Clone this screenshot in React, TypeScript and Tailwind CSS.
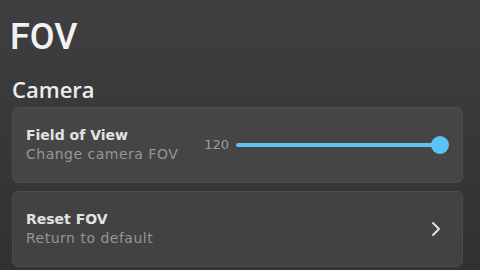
import { ChevronRight } from "lucide-react";

export default function App() {
  const value = 120;
  const pct = 100;

  return (
    <div className="w-[480px] h-[270px] overflow-hidden bg-gradient-to-b from-[#3f3f41] to-[#313131]">
      <div className="px-3">
        <h1 className="pt-[15px] text-[36px] leading-[44px] font-medium text-[#f2f2f2] -ml-[2px] font-['Roboto',sans-serif]">FOV</h1>
        <h2 className="mt-[17px] text-[22px] leading-[26px] font-semibold text-[#ececec] font-['Open_Sans',sans-serif]">Camera</h2>

        <div className="mt-[5px] flex flex-col gap-[8px] w-[451px] font-['DejaVu_Sans',sans-serif]">
          {/* Field of view */}
          <div className="h-[76px] rounded-md bg-[#454545] border border-[#4d4d4d] px-[13px] flex items-center">
            <div className="flex flex-col">
              <span className="text-[14px] leading-[19px] font-bold text-[#e2e2e2]">Field of View</span>
              <span className="text-[14px] leading-[19px] tracking-[0.5px] text-[#969696]">Change camera FOV</span>
            </div>
            <div className="ml-auto flex items-center gap-[7px] mr-[9px]">
              <span className="text-[13px] text-[#9c9c9c]">{value}</span>
              <div className="relative w-[204px] h-[18px] flex items-center">
                <div className="h-[4px] w-full rounded-full bg-[#5a5a5a]">
                  <div className="h-full rounded-full bg-[#5bc4f5]" style={{ width: `${pct}%` }} />
                </div>
                <div className="absolute right-[-9px] w-[18px] h-[18px] rounded-full bg-[#5bc4f5]" />
              </div>
            </div>
          </div>

          {/* Reset */}
          <div className="h-[76px] rounded-md bg-[#424242] border border-[#4b4b4b] px-[13px] flex items-center">
            <div className="flex flex-col">
              <span className="text-[14px] leading-[19px] font-bold text-[#e2e2e2]">Reset FOV</span>
              <span className="text-[14px] leading-[19px] tracking-[0.5px] text-[#969696]">Return to default</span>
            </div>
            <ChevronRight className="ml-auto mr-[1px] text-[#e0e0e0]" size={24} strokeWidth={2} />
          </div>
        </div>
      </div>
    </div>
  );
}
